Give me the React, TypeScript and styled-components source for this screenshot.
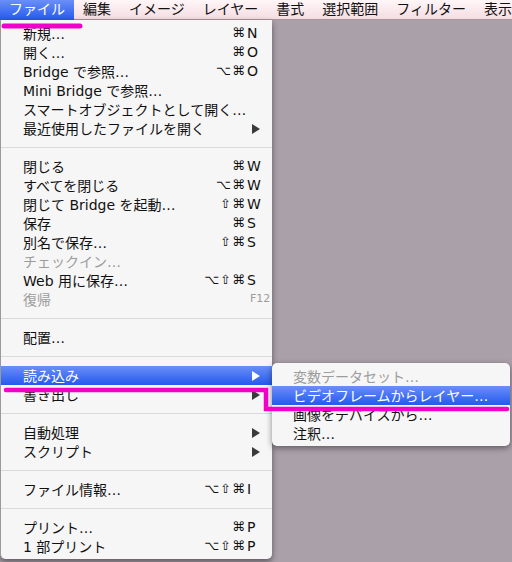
import styled, { createGlobalStyle } from "styled-components";

const GlobalStyle = createGlobalStyle`
  html, body {
    margin: 0;
    padding: 0;
    background: #aaa0aa;
  }
  body {
    width: 512px;
    height: 562px;
    overflow: hidden;
    font-family: "DejaVu Sans", "Noto Sans CJK JP", sans-serif;
  }
`;

type Entry =
  | { kind: "sep" }
  | { kind: "item"; label: string; mods?: string; keyName?: string; fn?: boolean; disabled?: boolean; sub?: boolean; active?: boolean };

const fileMenu: Entry[] = [
  { kind: "item", label: "新規…", mods: "⌘", keyName: "N" },
  { kind: "item", label: "開く…", mods: "⌘", keyName: "O" },
  { kind: "item", label: "Bridge で参照…", mods: "⌥⌘", keyName: "O" },
  { kind: "item", label: "Mini Bridge で参照…" },
  { kind: "item", label: "スマートオブジェクトとして開く…" },
  { kind: "item", label: "最近使用したファイルを開く", sub: true },
  { kind: "sep" },
  { kind: "item", label: "閉じる", mods: "⌘", keyName: "W" },
  { kind: "item", label: "すべてを閉じる", mods: "⌥⌘", keyName: "W" },
  { kind: "item", label: "閉じて Bridge を起動…", mods: "⇧⌘", keyName: "W" },
  { kind: "item", label: "保存", mods: "⌘", keyName: "S" },
  { kind: "item", label: "別名で保存…", mods: "⇧⌘", keyName: "S" },
  { kind: "item", label: "チェックイン…", disabled: true },
  { kind: "item", label: "Web 用に保存…", mods: "⌥⇧⌘", keyName: "S" },
  { kind: "item", label: "復帰", keyName: "F12", fn: true, disabled: true },
  { kind: "sep" },
  { kind: "item", label: "配置…" },
  { kind: "sep" },
  { kind: "item", label: "読み込み", sub: true, active: true },
  { kind: "item", label: "書き出し", sub: true },
  { kind: "sep" },
  { kind: "item", label: "自動処理", sub: true },
  { kind: "item", label: "スクリプト", sub: true },
  { kind: "sep" },
  { kind: "item", label: "ファイル情報…", mods: "⌥⇧⌘", keyName: "I" },
  { kind: "sep" },
  { kind: "item", label: "プリント…", mods: "⌘", keyName: "P" },
  { kind: "item", label: "1 部プリント", mods: "⌥⇧⌘", keyName: "P" },
];

const importMenu = [
  { label: "変数データセット…", disabled: true },
  { label: "ビデオフレームからレイヤー…", active: true },
  { label: "画像をデバイスから…" },
  { label: "注釈…" },
];

const menuBar = ["ファイル", "編集", "イメージ", "レイヤー", "書式", "選択範囲", "フィルター", "表示"];

const Page = styled.div`
  position: relative;
  width: 512px;
  height: 562px;
  overflow: hidden;
  background: #aaa0aa;
`;

const MenuBar = styled.div`
  display: flex;
  height: 20px;
  background: linear-gradient(#fff6f8, #f4dde2);
  border-bottom: 1px solid #a8949a;
  box-sizing: border-box;
  white-space: nowrap;
`;

const BarItem = styled.div<{ $open?: boolean }>`
  padding: 0 9px;
  height: 20px;
  line-height: 19px;
  font-size: 14px;
  color: ${(p) => (p.$open ? "#ffffff" : "#111111")};
  background: ${(p) => (p.$open ? "linear-gradient(#6a8ff6, #2559ef)" : "transparent")};
`;

/* dropdown menus float over the window, so they are positioned */
const Dropdown = styled.div`
  position: absolute;
  top: 20px;
  left: 0;
  display: flex;
  flex-direction: column;
  width: 272px;
  padding: 4px 0 3px;
  background: #f6f6f6;
  border-left: 1px solid #9a9a9a;
  border-radius: 0 0 5px 5px;
  box-shadow: 0 3px 6px rgba(0, 0, 0, 0.45);
  box-sizing: border-box;
`;

const SubMenu = styled.div`
  position: absolute;
  top: -3px;
  left: 100%;
  display: flex;
  flex-direction: column;
  width: 238px;
  padding: 4px 0 3px;
  background: #f6f6f6;
  border-radius: 5px;
  box-shadow: 0 2px 6px rgba(0, 0, 0, 0.45);
  box-sizing: border-box;
  z-index: 2;
`;

const Row = styled.div<{ $active?: boolean; $disabled?: boolean; $indent?: number }>`
  position: relative;
  display: flex;
  align-items: center;
  height: 19px;
  padding: 0 0 2px ${(p) => p.$indent ?? 22}px;
  box-sizing: border-box;
  font-size: 14px;
  white-space: nowrap;
  color: ${(p) => (p.$active ? "#ffffff" : p.$disabled ? "#9c9c9c" : "#111111")};
  background: ${(p) => (p.$active ? "linear-gradient(#6a8ff6, #2559ef)" : "transparent")};
`;

const Label = styled.span`
  flex: 1;
`;

const Mods = styled.span`
  font-family: "DejaVu Sans", sans-serif;
  font-size: 13px;
  letter-spacing: 1px;
  text-align: right;
  padding-right: 1px;
`;

const Key = styled.span<{ $fn?: boolean }>`
  width: 25px;
  font-family: "DejaVu Sans", sans-serif;
  font-size: ${(p) => (p.$fn ? "11px" : "14px")};
  padding-left: ${(p) => (p.$fn ? "3px" : "0")};
  box-sizing: border-box;
`;

const Arrow = styled.span<{ $active?: boolean }>`
  width: 0;
  height: 0;
  margin: 2px 12px 0 5px;
  border-left: 8px solid ${(p) => (p.$active ? "#ffffff" : "#3a3a3a")};
  border-top: 5px solid transparent;
  border-bottom: 5px solid transparent;
`;

const Separator = styled.div`
  height: 19px;
  display: flex;
  align-items: center;
  &::after {
    content: "";
    flex: 1;
    height: 1px;
    background: #dadada;
  }
`;

const Marks = styled.svg`
  position: absolute;
  inset: 0;
  pointer-events: none;
  z-index: 5;
`;

export default function App() {
  return (
    <Page>
      <GlobalStyle />
      <MenuBar>
        {menuBar.map((t, i) => (
          <BarItem key={t} $open={i === 0}>
            {t}
          </BarItem>
        ))}
      </MenuBar>
      <Dropdown>
        {fileMenu.map((e, i) =>
          e.kind === "sep" ? (
            <Separator key={i} />
          ) : (
            <Row key={i} $active={e.active} $disabled={e.disabled}>
              <Label>{e.label}</Label>
              {e.mods && <Mods>{e.mods}</Mods>}
              {e.keyName && <Key $fn={e.fn}>{e.keyName}</Key>}
              {e.sub && <Arrow $active={e.active} />}
              {e.active && (
                <SubMenu>
                  {importMenu.map((s) => (
                    <Row key={s.label} $indent={21} $active={s.active} $disabled={s.disabled}>
                      <Label>{s.label}</Label>
                    </Row>
                  ))}
                </SubMenu>
              )}
            </Row>
          )
        )}
      </Dropdown>
      <Marks width="512" height="562" viewBox="0 0 512 562">
        <line x1="4" y1="26" x2="80" y2="26" stroke="#f000c8" strokeWidth="5" strokeLinecap="round" />
        <path d="M6 390 H266 V409 H507" fill="none" stroke="#f000c8" strokeWidth="4.5" strokeLinecap="round" />
      </Marks>
    </Page>
  );
}
